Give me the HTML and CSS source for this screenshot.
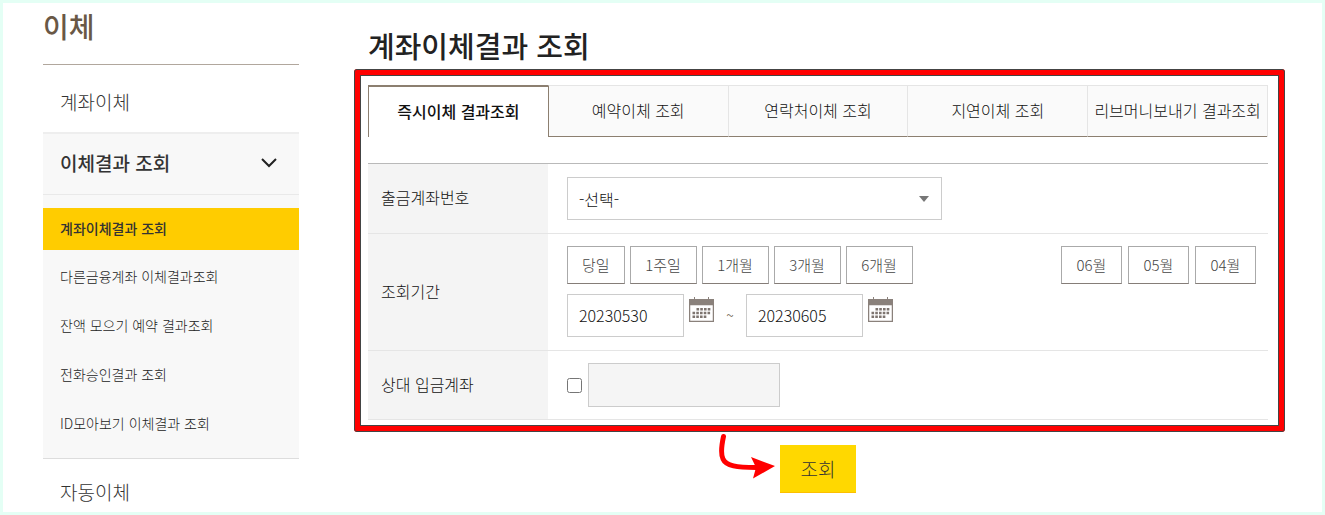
FILE: index.html
```html
<!doctype html>
<html lang="ko">
  <head>
    <meta charset="utf-8" />
    <meta name="viewport" content="width=device-width, initial-scale=1" />
    <title>계좌이체결과 조회</title>
    <link rel="stylesheet" href="styles.css">
  </head>
  <body>
    <div class="page">
      <aside class="sidebar">
        <h2 class="sidebar-title">이체</h2>
        <nav>
          <ul class="menu">
            <li><a class="menu-link" href="#">계좌이체</a></li>
            <li class="menu-open">
              <a class="menu-link current" href="#">
                이체결과 조회
                <svg class="chevron" width="16" height="10" viewBox="0 0 16 10" aria-hidden="true">
                  <path d="M1 1l7 7 7-7" fill="none" stroke="#222" stroke-width="2" />
                </svg>
              </a>
              <ul class="submenu">
                <li><a class="active" href="#">계좌이체결과 조회</a></li>
                <li><a href="#">다른금융계좌 이체결과조회</a></li>
                <li><a href="#">잔액 모으기 예약 결과조회</a></li>
                <li><a href="#">전화승인결과 조회</a></li>
                <li><a href="#">ID모아보기 이체결과 조회</a></li>
              </ul>
            </li>
            <li><a class="menu-link" href="#">자동이체</a></li>
          </ul>
        </nav>
      </aside>

      <main class="content">
        <h1>계좌이체결과 조회</h1>

        <form onsubmit="return false">
          <div class="highlight">
            <div class="tabs">
              <a class="tab selected" href="#">즉시이체 결과조회</a>
              <a class="tab" href="#">예약이체 조회</a>
              <a class="tab" href="#">연락처이체 조회</a>
              <a class="tab" href="#">지연이체 조회</a>
              <a class="tab" href="#">리브머니보내기 결과조회</a>
            </div>

            <table class="form-table">
              <tbody>
                <tr>
                  <th scope="row"><label for="account">출금계좌번호</label></th>
                  <td>
                    <select id="account" class="field account">
                      <option>-선택-</option>
                    </select>
                  </td>
                </tr>
                <tr>
                  <th scope="row"><label for="date-from">조회기간</label></th>
                  <td>
                    <div class="periods">
                      <button type="button" class="btn-line">당일</button>
                      <button type="button" class="btn-line wide">1주일</button>
                      <button type="button" class="btn-line wide">1개월</button>
                      <button type="button" class="btn-line wide">3개월</button>
                      <button type="button" class="btn-line wide">6개월</button>
                      <div class="months">
                        <button type="button" class="btn-line">06월</button>
                        <button type="button" class="btn-line">05월</button>
                        <button type="button" class="btn-line">04월</button>
                      </div>
                    </div>
                    <div class="dates">
                      <input id="date-from" class="field date" type="text" value="20230530">
                      <button type="button" class="btn-cal" aria-label="시작일 선택">
                        <svg width="25" height="25" viewBox="0 0 25 25"><use href="#calendar" /></svg>
                      </button>
                      <span class="tilde">~</span>
                      <input id="date-to" class="field date" type="text" value="20230605" aria-label="종료일">
                      <button type="button" class="btn-cal" aria-label="종료일 선택">
                        <svg width="25" height="25" viewBox="0 0 25 25"><use href="#calendar" /></svg>
                      </button>
                    </div>
                  </td>
                </tr>
                <tr>
                  <th scope="row"><label for="target">상대 입금계좌</label></th>
                  <td>
                    <div class="target-row">
                      <input class="check" type="checkbox" aria-label="상대 입금계좌 사용">
                      <input id="target" class="field target" type="text" disabled>
                    </div>
                  </td>
                </tr>
              </tbody>
            </table>
          </div>

          <div class="actions">
            <div class="submit-wrap">
              <svg class="arrow" width="60" height="50" viewBox="0 0 60 50" aria-hidden="true">
                <path d="M5.500 4.500C3 16 3 23 5 27C8 34 19 35.500 38 35.500" fill="none" stroke="#f00" stroke-width="5" stroke-linecap="round" />
                <path d="M33 25L57 34L35 46.500L38 35.500Z" fill="#f00" />
              </svg>
              <button type="submit" class="btn-submit">조회</button>
            </div>
          </div>
        </form>
      </main>
    </div>

    <svg class="sprite" aria-hidden="true">
      <symbol id="calendar" viewBox="0 0 25 25">
        <path d="M5.500 0v3M19.500 0v3" stroke="#8a817b" stroke-width="1" />
        <path d="M.5 7.500h24v17H.5z" fill="#fff" stroke="#8a817b" stroke-width="1.500" />
        <path d="M0 2h25v6H0z" fill="#8a817b" />
        <path d="M7.500 12.200h14M3.500 16h18M3.500 19.800h14" stroke="#7d746f" stroke-width="2.600" stroke-dasharray="2.600 1.150" />
      </symbol>
    </svg>
  </body>
</html>
```
FILE: styles.css
```css
* {
  box-sizing: border-box;
}

body {
  margin: 0;
  font-family: "Noto Sans CJK KR", sans-serif;
  font-size: 16px;
  font-weight: 300;
  line-height: 24px;
  color: #111;
}

a {
  color: inherit;
  text-decoration: none;
}

ul {
  margin: 0;
  padding: 0;
  list-style: none;
}

.page {
  display: flex;
  height: 100vh;
  overflow: hidden;
  border: 3px solid #e4fff5;
  background: #fff;
}

/* 왼쪽 메뉴 */
.sidebar {
  flex: none;
  width: 256px;
  margin-left: 40px;
}

.sidebar-title {
  margin: 0;
  height: 62px;
  border-bottom: 1px solid #b1a79d;
  font-size: 28px;
  font-weight: 500;
  line-height: 46px;
  color: #695846;
}

.menu {
  padding-top: 4px;
}

.menu-link {
  display: flex;
  align-items: center;
  justify-content: space-between;
  height: 63px;
  padding: 2px 22px 0 17px;
  font-size: 19px;
  color: #333;
}

.menu-open {
  border-top: 2px solid #eee;
  border-bottom: 1px solid #ddd;
  background: #f8f8f8;
}

.menu-link.current {
  height: 61px;
  padding-top: 0;
  padding-bottom: 2px;
  border-bottom: 1px solid #e9e9e9;
  font-weight: 500;
}

.submenu {
  display: grid;
  gap: 7px;
  padding: 13px 0 12px;
}

.submenu a {
  display: block;
  padding: 0 0 4px 17px;
  font-size: 14px;
  line-height: 38px;
  color: #222;
}

.submenu .active {
  padding-bottom: 2px;
  background: #fc0;
  font-weight: 500;
  line-height: 40px;
  color: #333;
}

/* 본문 */
.content {
  flex: 1;
  margin: 0 37px 0 55px;
}

h1 {
  margin: 0;
  padding: 20px 14px 2px;
  font-size: 29px;
  font-weight: 500;
  line-height: 44px;
  color: #222;
}

.highlight {
  padding: 10px 11px 6px 8px;
  border: 6px solid #f00;
  border-radius: 3px;
  outline: 1px solid #444;
  outline-offset: -1px;
  box-shadow: inset 0 0 0 1px #444;
}

.tabs {
  display: grid;
  grid-template-columns: repeat(5, 1fr);
  border-right: 1px solid #e5e5e5;
}

.tab {
  height: 52px;
  border-top: 1px solid #e5e5e5;
  border-bottom: 1px solid #8c7f70;
  border-left: 1px solid #e5e5e5;
  background: #fafafa;
  line-height: 48px;
  text-align: center;
  white-space: nowrap;
}

.tab.selected {
  border-top: 2px solid #8c7f70;
  border-bottom: 0;
  border-left-color: #8c7f70;
  background: #fff;
  font-weight: 500;
}

.tab.selected + .tab {
  border-left-color: #8c7f70;
}

.form-table {
  width: 100%;
  margin-top: 26px;
  border-top: 1px solid #b9b9b9;
  border-spacing: 0;
}

.form-table th,
.form-table td {
  border-bottom: 1px solid #e5e5e5;
}

.form-table th {
  width: 180px;
  padding: 0 13px 3px;
  background: #f4f4f4;
  font-weight: 300;
  text-align: left;
}

.form-table td {
  padding: 12px 12px 12px 19px;
}

.field {
  display: block;
  height: 43px;
  padding: 0 11px;
  border: 1px solid #ccc;
  border-radius: 0;
  background: #fff;
  font: inherit;
  color: #111;
}

.account {
  width: 375px;
  margin: 1px 0;
  appearance: none;
  background: #fff url("data:image/svg+xml,%3Csvg xmlns='http://www.w3.org/2000/svg' width='10' height='6'%3E%3Cpath d='M0 0h10L5 6z' fill='%23777'/%3E%3C/svg%3E") no-repeat right 12px center;
}

.periods,
.dates {
  display: flex;
  gap: 5px;
}

.months {
  display: flex;
  gap: 6px;
  margin-left: auto;
}

.btn-line {
  height: 38px;
  padding: 0 14px;
  border: 1px solid #aaa;
  border-bottom-color: #857d78;
  background: #fff;
  font: inherit;
  font-size: 15px;
  color: #444;
}

.btn-line.wide {
  min-width: 67px;
}

.months .btn-line {
  min-width: 61px;
}

.dates {
  padding: 10px 0 1px;
}

.date {
  width: 117px;
  padding-bottom: 2px;
}

.btn-cal {
  width: 25px;
  height: 25px;
  margin-top: 3px;
  padding: 0;
  border: 0;
  background: none;
}

.btn-cal svg {
  display: block;
}

.tilde {
  width: 22px;
  font-size: 14px;
  line-height: 42px;
  text-align: center;
  color: #695846;
}

.target-row {
  display: flex;
  align-items: center;
  gap: 6px;
}

.check {
  width: 15px;
  height: 15px;
  margin: 0;
}

.target {
  width: 192px;
  height: 44px;
  background: #f5f5f5;
}

.actions {
  display: flex;
  justify-content: center;
  padding: 13px 3px 0 0;
}

.submit-wrap {
  position: relative;
}

.btn-submit {
  width: 76px;
  height: 48px;
  padding: 0;
  border: 0;
  border-bottom: 1px solid #fdbf00;
  background: #ffd800;
  font: inherit;
  font-size: 19px;
  color: #333;
}

/* 조회 버튼을 가리키는 화살표 */
.arrow {
  position: absolute;
  top: -13px;
  right: 78px;
}

.sprite {
  display: none;
}
```
